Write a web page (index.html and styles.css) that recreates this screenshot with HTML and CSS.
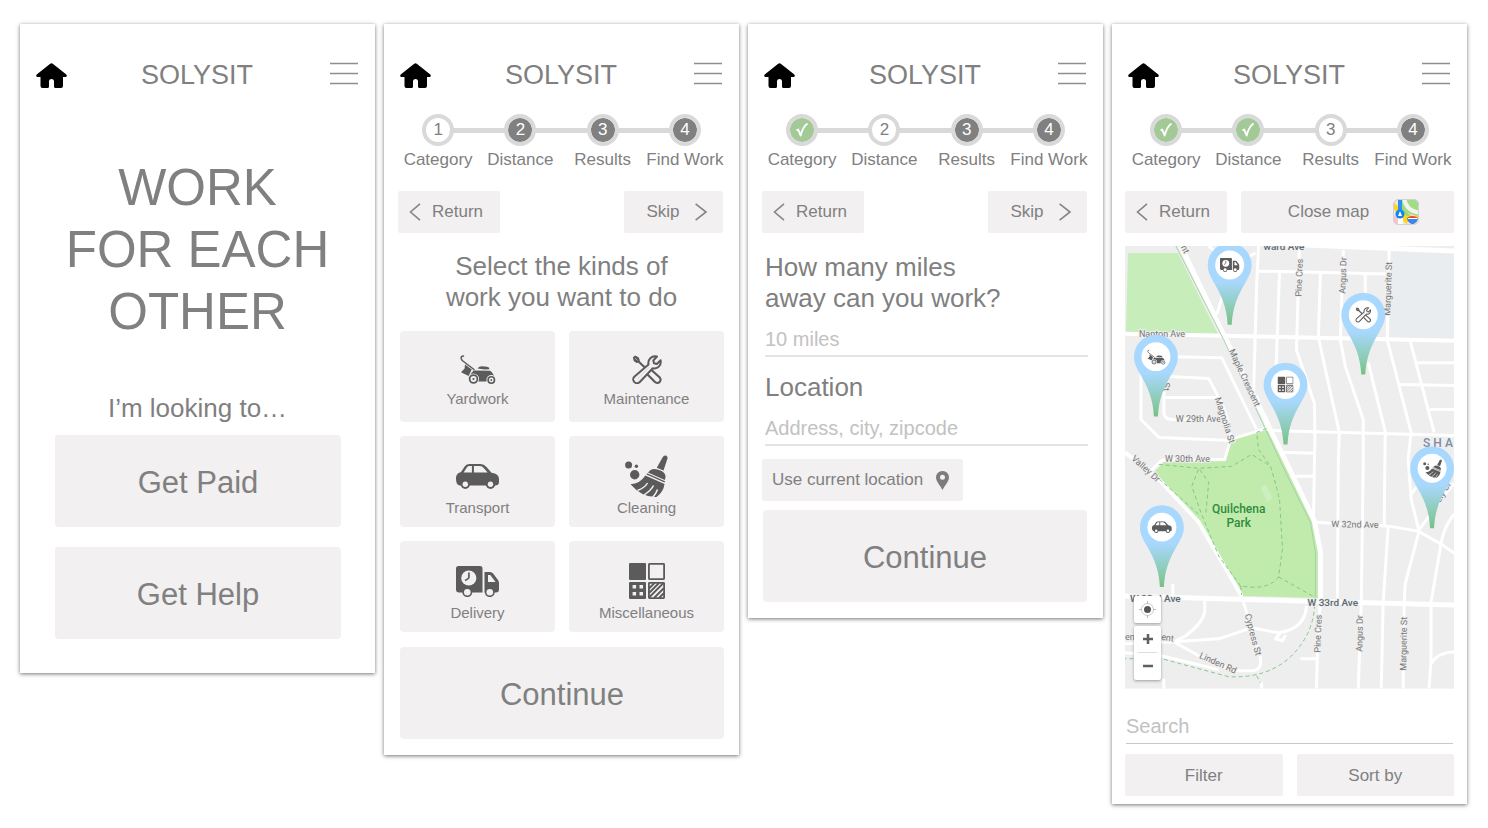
FILE: index.html
```html
<!DOCTYPE html>
<html lang="en">
<head>
<meta charset="utf-8">
<meta name="viewport" content="width=device-width, initial-scale=1">
<title>Solysit</title>
<link rel="stylesheet" href="styles.css">
</head>
<body>
<svg class="sprite" aria-hidden="true">
  <defs>
    <linearGradient id="pin-fill" gradientUnits="userSpaceOnUse" x1="0" y1="16" x2="0" y2="60">
      <stop offset="0" stop-color="#a9d8ff"/><stop offset="0.75" stop-color="#86c9a4"/><stop offset="1" stop-color="#76c088"/>
    </linearGradient>
    <g id="pin">
      <path fill="url(#pin-fill)" d="M-22 0A22 22 0 0 1 22 0C22 7 19 12 15 19C8 31 3 42 2 60H-2C-3 42-8 31-15 19C-19 12-22 7-22 0Z"/>
      <circle r="14.5" fill="#fff"/>
    </g>
  </defs>
  <symbol id="home" viewBox="0 0 31 25">
    <path d="M14.2.8Q15.5-.4 16.8.8L30.3 11.6Q31.6 13.8 29.4 14H27V23Q27 25 25 25H19.6Q18 25 18 23.5V18.5Q18 16 15.5 16T13 18.5V23.5Q13 25 11.5 25H6.5Q4.5 25 4.5 23V14H1.6Q-.6 13.8.7 11.6Z"/>
  </symbol>
  <symbol id="menu" viewBox="0 0 28 23"><path d="M0 1.5H28M0 11.5H28M0 21.5H28" fill="none" stroke="#8e8e8e" stroke-width="1.6"/></symbol>
  <symbol id="check" viewBox="0 0 14 16"><path d="M1.5 8.5L3.2 7.6L5.6 13.5Q8 4.5 12.5 1.5" fill="none" stroke="#fff" stroke-width="1.9" stroke-linejoin="round"/></symbol>
  <symbol id="left" viewBox="0 0 12 18"><path d="M11 .8L1.5 9L11 17.2" fill="none" stroke="#858585" stroke-width="1.6"/></symbol>
  <symbol id="right" viewBox="0 0 12 18"><path d="M.6.8L11 9L.6 17.2" fill="none" stroke="#858585" stroke-width="1.6"/></symbol>
  <symbol id="place" viewBox="0 0 13 19"><path fill="#7c7c7c" fill-rule="evenodd" d="M6.5 0A6.4 6.4 0 0 1 13 6.4C13 10.5 8.5 14.5 6.5 19C4.5 14.5 0 10.5 0 6.4A6.4 6.4 0 0 1 6.5 0ZM6.5 3.8A2.5 2.5 0 1 0 6.5 8.8A2.5 2.5 0 1 0 6.5 3.8Z"/></symbol>
  <symbol id="mower" viewBox="0 0 36 29">
    <path d="M3.5 1Q.6 1.2 1.2 3.3Q1.5 5 3.5 6.5L14 14.5" fill="none" stroke="#5b5b5b" stroke-width="1.5" stroke-linecap="round"/>
    <path class="ink" d="M5 9.5L11.7 14.6L8.6 21L1 17.2L4.6 13.5Z"/>
    <path class="ink" d="M17.5 13.5Q19 11.2 22 11.3L27 11.8Q29.5 12 29.5 14.3L25 14.5Z"/>
    <path class="ink" d="M13.5 15.5L30 15.8Q32.5 17 34.5 22L31 26.5H12L8.5 22Z"/>
    <circle class="hole" cx="13.5" cy="24" r="5.6"/><circle class="hole" cx="31.3" cy="25" r="4.9"/>
    <circle cx="13.5" cy="24" r="3.9" fill="none" stroke="#5b5b5b" stroke-width="1.8"/><circle class="ink" cx="13.5" cy="24" r="1.1"/>
    <circle cx="31.3" cy="25" r="3.2" fill="none" stroke="#5b5b5b" stroke-width="1.6"/><circle class="ink" cx="31.3" cy="25" r=".9"/>
  </symbol>
  <symbol id="tools" viewBox="0 0 30 29">
    <path d="M6 6L15 14.5M20 15.5L27.5 22.3A3.2 3.2 0 0 1 23 27L15.5 19.5" fill="none" stroke="#5b5b5b" stroke-width="2.2" stroke-linecap="round"/>
    <path class="ink" d="M.8 2.6L3 .6L6.5 2.2L7.9 5.2L6.5 7.5L4.5 8L1.8 6Z"/><path d="M3 3L5.5 5.5" stroke="#aaa" stroke-width="1"/>
    <path class="hole" stroke="#5b5b5b" stroke-width="2" stroke-linejoin="round" d="M16.5 9.5C15.5 4.5 19.5.3 25 1.5L21.3 5.5L22 8.3L24.8 9L28.6 5.3C29.6 10.6 25.5 14.3 20.8 13.2L7.8 27A3.7 3.7 0 0 1 2.3 21.7Z"/>
    <path d="M5.5 24L17.5 12" stroke="#ccc" stroke-width=".7"/>
  </symbol>
  <symbol id="car" viewBox="0 0 43 25">
    <path class="ink" d="M0 15C0 11 1.5 9 5 8L9 2Q10.5 0 13.5 0H24.5Q28 0 30.5 3L35.5 8.7Q43 9.8 43 15V18Q43 21.5 39 21.5H3.5Q0 20.5 0 15Z"/>
    <path class="hole" d="M7.6 8.6L11 3.2Q11.8 2 13.5 2H15.9V8.6ZM17.9 2H24Q26 2 27.7 4L31.6 8.6H17.9Z"/>
    <circle class="ink" cx="9.3" cy="20.3" r="4.7"/><circle class="ink" cx="34.5" cy="20.3" r="4.7"/>
    <circle class="hole" cx="9.3" cy="20.3" r="2.7"/><circle class="hole" cx="34.5" cy="20.3" r="2.7"/>
  </symbol>
  <symbol id="broom" viewBox="0 0 43 43">
    <circle class="ink" cx="3.6" cy="10" r="3.5"/><circle class="ink" cx="11.4" cy="11.2" r="1.7"/><circle class="ink" cx="9.7" cy="19.7" r="4.7"/>
    <path class="ink" d="M37.8 2Q39 0 41 .6Q43 1.4 42.5 3.5L38.5 15.6L31.8 12.8Z"/>
    <path class="ink" d="M25 15.5Q29 12.5 35.5 15.6Q41 18 40.5 22.5L39.8 25L23 17.5Z"/>
    <path d="M21.8 18.8L39.8 26.8" stroke="#5b5b5b" stroke-width="1.4"/>
    <path class="ink" d="M20.3 20.6L39.5 29Q38.5 37 31.5 42Q17 42.5 5.5 29.2Q15 29 20.3 20.6Z"/>
    <path class="cut" d="M12.500 35.500Q20 32.500 22.500 28M19 40Q26.500 35 28.500 30.500M27.500 42.500Q31.500 38 32.500 34.500"/>
  </symbol>
  <symbol id="truck" viewBox="0 0 43 31">
    <path class="ink" d="M2.5 0H24Q26.5 0 26.5 2.5V26.5H3Q0 26.5 0 23.5V2.5Q0 0 2.5 0ZM28.5 6H34Q36 6 37.5 8L42 14Q43 15.5 43 17V23.5Q43 26.5 40 26.5H28.5Z"/>
    <circle class="hole" cx="12.8" cy="12" r="7.6"/><path d="M12.9 6.5V11.5Q12.5 13 9 14.5" fill="none" stroke="#5b5b5b" stroke-width="1.7"/>
    <path class="hole" d="M32 9H34.3L39.6 16H32Z"/>
    <circle class="ink" cx="11.3" cy="26.2" r="4.9"/><circle class="ink" cx="33.8" cy="26.2" r="4.9"/>
    <circle class="hole" cx="11.3" cy="26.2" r="3.3"/><circle class="hole" cx="33.8" cy="26.2" r="3.3"/>
  </symbol>
  <symbol id="misc" viewBox="0 0 36 36">
    <rect class="ink" width="17" height="17" rx="1"/><rect class="ink" y="19" width="17" height="17" rx="1"/>
    <g class="hole"><rect x="3.6" y="22" width="3.5" height="3.5"/><rect x="10.5" y="22" width="3.5" height="3.5"/><rect x="3.6" y="29" width="3.5" height="3.5"/><rect x="10.5" y="29" width="3.5" height="3.5"/></g>
    <g fill="none" stroke="#5b5b5b" stroke-width="1.8"><rect x="19.9" y=".9" width="15.2" height="15.2" rx=".5"/><rect x="19.9" y="19.9" width="15.2" height="15.2" rx=".5"/>
    <path d="M20 25.5L25.5 20M20 30L30 20M20 34.5L34.5 20M25 35L35 25M30 35L35 30"/></g>
  </symbol>
  <symbol id="mapapp" viewBox="0 0 26 26">
    <clipPath id="app-clip"><rect width="26" height="26" rx="5.5"/></clipPath>
    <g clip-path="url(#app-clip)">
      <rect width="26" height="26" fill="#e9e7e1"/>
      <path d="M9 0H26V18L9 12Z" fill="#a0dd86"/>
      <path d="M11 -1Q13 12 27 14" fill="none" stroke="#f4f2ec" stroke-width="4"/>
      <path d="M0 3L10 12Q17 19 26 16V19L18 20L13 25L0 9Z" fill="#ffd420"/><path d="M9 6Q12 14 18 16L14 17L9 13Z" fill="#96dc70"/>
      <path d="M0 16L8 20V26H0Z" fill="#f8c4cf"/><path d="M5 17H10V26H5Z" fill="#fff"/>
      <path d="M5 0H9V13H5Z" fill="#3291f0"/><circle cx="7" cy="15" r="4.5" fill="#1284f5"/><path d="M7 12L9 17H5Z" fill="#fff"/>
      <path d="M14 19H25Q25 23 19.5 25.5Q14 23 14 19Z" fill="#3b86e8"/><path d="M14 19Q19 15 25 19Z" fill="#ee4435"/><path d="M15 19.5H24.500" stroke="#fff" stroke-width="1"/>
    </g>
    <rect x=".5" y=".5" width="25" height="25" rx="5" fill="none" stroke="#d2d2d2"/>
  </symbol>
</svg>

<main class="board">
  <section class="screen screen-start">
    <header class="topbar">
      <a class="home" href="#" aria-label="Home"><svg width="31" height="25"><use href="#home"/></svg></a>
      <p class="brand">SOLYSIT</p>
      <button class="menu" aria-label="Menu"><svg width="28" height="23"><use href="#menu"/></svg></button>
    </header>
    <h1 class="hero">WORK<br>FOR EACH<br>OTHER</h1>
    <p class="prompt">I’m looking to…</p>
    <div class="choices">
      <button class="btn btn-large">Get Paid</button>
      <button class="btn btn-large">Get Help</button>
    </div>
  </section>

  <section class="screen">
    <header class="topbar">
      <a class="home" href="#" aria-label="Home"><svg width="31" height="25"><use href="#home"/></svg></a>
      <p class="brand">SOLYSIT</p>
      <button class="menu" aria-label="Menu"><svg width="28" height="23"><use href="#menu"/></svg></button>
    </header>
    <ol class="steps">
      <li class="step"><span class="dot current">1</span>Category</li>
      <li class="step"><span class="dot">2</span>Distance</li>
      <li class="step"><span class="dot">3</span>Results</li>
      <li class="step"><span class="dot">4</span>Find Work</li>
    </ol>
    <nav class="nav">
      <button class="btn btn-return"><svg width="12" height="18"><use href="#left"/></svg>Return</button>
      <button class="btn btn-skip">Skip<svg width="12" height="18"><use href="#right"/></svg></button>
    </nav>
    <h2 class="question centered">Select the kinds of<br>work you want to do</h2>
    <div class="tiles">
      <button class="btn tile compact"><span class="tile-icon"><svg width="36" height="29"><use href="#mower"/></svg></span>Yardwork</button>
      <button class="btn tile compact"><span class="tile-icon"><svg width="30" height="29"><use href="#tools"/></svg></span>Maintenance</button>
      <button class="btn tile"><span class="tile-icon"><svg width="43" height="25"><use href="#car"/></svg></span>Transport</button>
      <button class="btn tile"><span class="tile-icon"><svg width="43" height="43"><use href="#broom"/></svg></span>Cleaning</button>
      <button class="btn tile"><span class="tile-icon"><svg width="43" height="31"><use href="#truck"/></svg></span>Delivery</button>
      <button class="btn tile"><span class="tile-icon"><svg width="36" height="36"><use href="#misc"/></svg></span>Miscellaneous</button>
    </div>
    <button class="btn btn-large after-tiles">Continue</button>
  </section>

  <section class="screen">
    <header class="topbar">
      <a class="home" href="#" aria-label="Home"><svg width="31" height="25"><use href="#home"/></svg></a>
      <p class="brand">SOLYSIT</p>
      <button class="menu" aria-label="Menu"><svg width="28" height="23"><use href="#menu"/></svg></button>
    </header>
    <ol class="steps">
      <li class="step"><span class="dot done"><svg width="14" height="16"><use href="#check"/></svg></span>Category</li>
      <li class="step"><span class="dot current">2</span>Distance</li>
      <li class="step"><span class="dot">3</span>Results</li>
      <li class="step"><span class="dot">4</span>Find Work</li>
    </ol>
    <nav class="nav">
      <button class="btn btn-return"><svg width="12" height="18"><use href="#left"/></svg>Return</button>
      <button class="btn btn-skip">Skip<svg width="12" height="18"><use href="#right"/></svg></button>
    </nav>
    <form class="form">
      <label class="question" for="miles">How many miles<br>away can you work?</label>
      <input class="field" id="miles" type="text" placeholder="10 miles">
      <label class="question second" for="place-input">Location</label>
      <input class="field" id="place-input" type="text" placeholder="Address, city, zipcode">
    </form>
    <button class="btn btn-location">Use current location<svg width="13" height="19"><use href="#place"/></svg></button>
    <button class="btn btn-large after-location">Continue</button>
  </section>

  <section class="screen screen-map">
    <header class="topbar">
      <a class="home" href="#" aria-label="Home"><svg width="31" height="25"><use href="#home"/></svg></a>
      <p class="brand">SOLYSIT</p>
      <button class="menu" aria-label="Menu"><svg width="28" height="23"><use href="#menu"/></svg></button>
    </header>
    <ol class="steps">
      <li class="step"><span class="dot done"><svg width="14" height="16"><use href="#check"/></svg></span>Category</li>
      <li class="step"><span class="dot done"><svg width="14" height="16"><use href="#check"/></svg></span>Distance</li>
      <li class="step"><span class="dot current">3</span>Results</li>
      <li class="step"><span class="dot">4</span>Find Work</li>
    </ol>
    <nav class="nav nav-map">
      <button class="btn btn-return"><svg width="12" height="18"><use href="#left"/></svg>Return</button>
      <button class="btn btn-map">Close map<svg width="26" height="26"><use href="#mapapp"/></svg></button>
    </nav>
    <div class="map">
      <svg class="map-art" viewBox="0 0 330 444" role="img" aria-label="Jobs near Quilchena Park">
        <rect width="330" height="444" fill="#eeeeee"/>
        <path d="M3 7H53L93 88L1 86Z" fill="#c7edba"/>
        <path d="M267 7H330V93H267Z" fill="#e9edf0"/>
        <path d="M29 227L40 216H101L107 194L142 183L190 280L194.500 307V353L117 351L74 277Z" fill="#c0ebad"/>
        <path d="M136 242L141 239L148 253L143 257Z" fill="#cdefbf"/>
        <g id="streets" fill="none" stroke-linejoin="round">
          <g stroke="#fff" stroke-width="3">
            <path d="M134 25L264 28M134 0L132 40L129 147M155 26L151 137M175 0L172 104L190 158L190.500 190L189 277M196 27L194 91L201 124L215 187L214 214L213 357M219 4L216 94L221 121L239 174V214L237 357L234 444M241 27V60M244 117L261 186L260 280M264 281L259 357L257 444M265 4L263 94L287 187L284 214L287 254L295 286L281 339L280 361L279 444"/>
            <path d="M286 95L310 187M292 117H330M274 139L330 140M306 164H330M144 185L330 190M144 185L132 150M157 207L189 208M171 231H189M192 277L264 281L294 286L317 299L330 308M294 286L321 249L330 238M286 251L292 242M330 269Q319 283 317 299L307 357V414L305 444M307 419Q313 408 330 407"/>
            <path d="M92 69L107 20L131 7M84 0L100 14M16 120V174L34 192L106 195M50 111L97 112L132 184M44 131L84 133L94 152Q104 170 106 194L100 214L37 215L26 225M39 152H92M39 140V167Q39 174 48 174H97M106 194L142 183"/>
            <path d="M48 339V352M80 356V367Q78 378 61 391L49 397L94 394L127 383L154 388Q181 384 182 361M156 388L151 394L158 396L161 390M49 397L74 411L109 426H129Q139 424 135 410L127 384L117 351M0 408L36 411L94 425M196 357L194 381L192 444M176 414H192M39 434V444M137 437V444M0 399L49 397"/>
          </g>
          <path stroke="#fff" stroke-width="4" d="M0 88L330 95M0 207L32 232L74 277L117 351"/>
          <path stroke="#fff" stroke-width="5" d="M56 0L99 89L141 174L190 276L196 307V357M130-3L330 5M0 351L174 356L330 360"/>
          <path stroke="#a4d3a5" stroke-width="1" d="M51 0L99 94L163 231L186 277L191 307V353"/>
          <path stroke="#83c68d" stroke-width="1" stroke-dasharray="4 3" d="M34 219L74 223L107 221L127 209L146 221Q151 238 155 254L158 304L154 332Q145 344 124 342L116 341L94 311L76 267L67 241L74 223L84 237L81 269M29 229L76 271M142 183L132 187L134 204L146 221M154 332L190 352V364Q187 393 164 414Q140 434 104 432Q70 423 37 414H0M116 341L117 350M132 431L136 438"/>
        </g>
        <g class="street">
          <text x="14" y="91">Nanton Ave</text><text x="51" y="177">W 29th Ave</text><text x="40" y="217">W 30th Ave</text><text x="207" y="282" transform="rotate(1 207 282)">W 32nd Ave</text>
          <text transform="translate(56 1) rotate(64)">nt</text>
          <text transform="translate(104 105) rotate(65)">Maple Crescent</text>
          <text transform="translate(90 153) rotate(72)">Magnolia St</text>
          <text transform="translate(38 137) rotate(90)">St</text>
          <text transform="translate(6 214) rotate(42)">Valley Dr</text>
          <text transform="translate(177 51) rotate(-88)">Pine Cres</text><text transform="translate(221 48) rotate(-88)">Angus Dr</text><text transform="translate(266 70) rotate(-88)">Marguerite St</text>
          <text transform="translate(196 408) rotate(-88)">Pine Cres</text><text transform="translate(238 407) rotate(-89)">Angus Dr</text><text transform="translate(282 426) rotate(-89)">Marguerite St</text>
          <text transform="translate(120 370) rotate(75)">Cypress St</text><text transform="translate(74 413) rotate(24)">Linden Rd</text>
          <text x="0" y="395">en</text><text transform="translate(36 395) rotate(8)">ent</text>
          <text transform="translate(316 258) rotate(-60)">ely Cr</text>
        </g>
        <g class="avenue"><text x="139" y="4">ward Ave</text><text x="183" y="361">W 33rd Ave</text><text x="5" y="357">W 33rd Ave</text></g>
        <g class="park"><text x="114" y="268">Quilchena</text><text x="114" y="282">Park</text></g>
        <text class="district" x="299" y="202">SHA</text>
        <g transform="translate(105 19)"><use href="#pin"/><use href="#truck" x="-10" y="-7" width="20" height="14"/></g>
        <g transform="translate(31 111)"><use href="#pin"/><use href="#mower" x="-9" y="-7" width="19" height="15"/></g>
        <g transform="translate(239 69)"><use href="#pin"/><use href="#tools" x="-8" y="-8" width="16" height="16"/></g>
        <g transform="translate(161 139)"><use href="#pin"/><use href="#misc" x="-8" y="-8" width="16" height="16"/></g>
        <g transform="translate(308 223)"><use href="#pin"/><use href="#broom" x="-9" y="-9" width="19" height="19"/></g>
        <g transform="translate(37 282)"><use href="#pin"/><use href="#car" x="-10" y="-6" width="20" height="12"/></g>
      </svg>
      <div class="map-controls">
        <button class="locate" aria-label="Show my location"><svg width="17" height="17" viewBox="0 0 17 17"><circle cx="8.5" cy="8.5" r="6" fill="none" stroke="#ccc"/><path d="M8.5 0V3M8.5 14V17M0 8.5H3M14 8.5H17" stroke="#bbb"/><circle cx="8.5" cy="8.5" r="3.5" fill="#555"/></svg></button>
        <div class="zoom">
          <button aria-label="Zoom in"><svg width="12" height="12" viewBox="0 0 12 12"><path d="M6 1V11M1 6H11" stroke="#5f5f5f" stroke-width="2.500"/></svg></button>
          <button aria-label="Zoom out"><svg width="12" height="12" viewBox="0 0 12 12"><path d="M1 6H11" stroke="#5f5f5f" stroke-width="2.500"/></svg></button>
        </div>
      </div>
    </div>
    <input class="field search" type="search" aria-label="Search" placeholder="Search">
    <div class="pair">
      <button class="btn">Filter</button>
      <button class="btn">Sort by</button>
    </div>
  </section>
</main>
</body>
</html>
```

FILE: styles.css
```css
* { box-sizing: border-box; }

body {
  margin: 0;
  background: #fff;
  color: #808080;
  font-family: "Liberation Sans", Arial, sans-serif;
  font-size: 17px;
}

p, h1, h2, ol { margin: 0; padding: 0; font-weight: 400; }
svg { display: block; flex: none; }
button, input { font: inherit; color: inherit; }

.sprite { position: absolute; width: 0; height: 0; }
.ink { fill: #5b5b5b; }
.hole { fill: var(--hole); }
.cut { fill: none; stroke: var(--hole); stroke-width: 1.5px; }

.board {
  display: grid;
  grid-template-columns: repeat(auto-fit, minmax(300px, 1fr));
  align-items: start;
  gap: 9px;
  padding: 24px 21px 24px 20px;
}

.screen {
  display: flex;
  flex-direction: column;
  padding: 36px 13px 16px;
  background: #fff;
  box-shadow: 0 1px 4px rgba(0, 0, 0, 0.55);
}
.screen-start { padding-bottom: 34px; }
.screen-map { padding-bottom: 8px; }

.topbar {
  display: grid;
  grid-template-columns: 1fr auto 1fr;
  align-items: center;
  height: 30px;
  padding: 0 4px 0 3px;
}
.home { color: #000; justify-self: start; }
.brand { font-size: 27px; line-height: 30px; }
.menu { justify-self: end; padding: 0 0 4px; border: 0; background: none; }

.hero { margin-top: 67px; font-size: 51px; line-height: 62px; text-align: center; }
.prompt { margin-top: 50px; font-size: 26px; line-height: 31px; text-align: center; }
.choices { display: grid; gap: 20px; margin: 11px 21px 0 22px; }

.btn {
  display: flex;
  align-items: center;
  justify-content: center;
  height: 42px;
  padding: 0;
  border: 0;
  border-radius: 2px;
  background: #f2f0f1;
}
.btn-large { height: 92px; padding-top: 3px; border-radius: 4px; font-size: 31px; }

.steps {
  display: grid;
  grid-template-columns: repeat(4, 1fr);
  margin-top: 24px;
  list-style: none;
  background: linear-gradient(#d9d9d9, #d9d9d9) center 14px / 75% 5px no-repeat;
}
.step {
  display: flex;
  flex-direction: column;
  align-items: center;
  gap: 4px;
  line-height: 20px;
  white-space: nowrap;
}
.dot {
  display: flex;
  align-items: center;
  justify-content: center;
  width: 32px;
  height: 32px;
  border: 4px solid #d9d9d9;
  border-radius: 50%;
  background: #808080 padding-box;
  color: #fff;
}
.dot.current { background-color: #fff; color: #808080; }
.dot.done { background-color: #a3c997; }

.nav { display: flex; justify-content: space-between; gap: 14px; margin: 21px 3px 0 1px; }
.nav-map { margin: 21px 0 0; }
.btn-return { width: 102px; gap: 11px; padding-right: 6px; }
.btn-skip { width: 99px; gap: 15px; padding-left: 6px; }
.btn-map { flex: 1; gap: 24px; padding-left: 12px; }

.question { font-size: 26px; line-height: 31px; }
.centered { margin-top: 18px; text-align: center; }

.tiles {
  display: grid;
  grid-template-columns: 1fr 1fr;
  gap: 14px;
  margin: 18px 2px 0 3px;
}
.tile {
  --hole: #f2f0f1;
  flex-direction: column;
  justify-content: flex-start;
  height: 91px;
  padding-top: 17px;
  border-radius: 4px;
  font-size: 15px;
  line-height: 18px;
}
.tile-icon { display: flex; align-items: center; height: 46px; }
.compact .tile-icon { height: 42px; }
.after-tiles { margin: 15px 2px 0 3px; }

.form { display: flex; flex-direction: column; margin: 19px 2px 0 4px; }
.second { margin-top: 15px; }
.field {
  width: 100%;
  height: 34px;
  margin-top: 9px;
  padding: 0;
  border: 0;
  border-bottom: 2px solid #e4e4e4;
  border-radius: 0;
  background: none;
  font-size: 20px;
  appearance: none;
}
.field::placeholder { color: #c2c2c2; opacity: 1; }
.btn-location { align-self: flex-start; gap: 13px; margin: 13px 0 0 1px; padding: 0 14px 0 10px; }
.after-location { margin: 9px 3px 0 2px; }

.map { position: relative; margin-top: 13px; --hole: #fff; }
.map-art { width: 100%; height: auto; overflow: hidden; font-family: Roboto, sans-serif; }
.street { font-size: 9px; fill: #777; stroke: #eee; stroke-width: 2px; paint-order: stroke; }
.avenue { font-size: 10px; font-weight: 500; fill: #5d6a70; stroke: #eee; stroke-width: 2px; paint-order: stroke; }
.park { font-size: 12px; font-weight: 500; fill: #2f8b3e; text-anchor: middle; }
.district { font-size: 12px; font-weight: 500; fill: #7c8ca3; letter-spacing: 3px; }

.map-controls {
  position: absolute;
  left: 9px;
  bottom: 9px;
  display: grid;
  gap: 3px;
  width: 27px;
}
.map-controls button {
  display: flex;
  align-items: center;
  justify-content: center;
  width: 27px;
  height: 27px;
  padding: 0;
  border: 0;
  background: #fff;
}
.map-controls .locate, .zoom { border-radius: 2px; box-shadow: 0 1px 3px rgba(0, 0, 0, 0.35); }
.zoom { background: linear-gradient(#ddd, #ddd) center / 19px 1px no-repeat #fff; }
.map-controls .zoom button { background: none; }

.search { margin: 21px 1px 0; width: auto; border-bottom: 1px solid #c9c9c9; }
.pair { display: grid; grid-template-columns: 1fr 1fr; gap: 14px; margin-top: 10px; }
.pair .btn { padding-top: 2px; }
```
